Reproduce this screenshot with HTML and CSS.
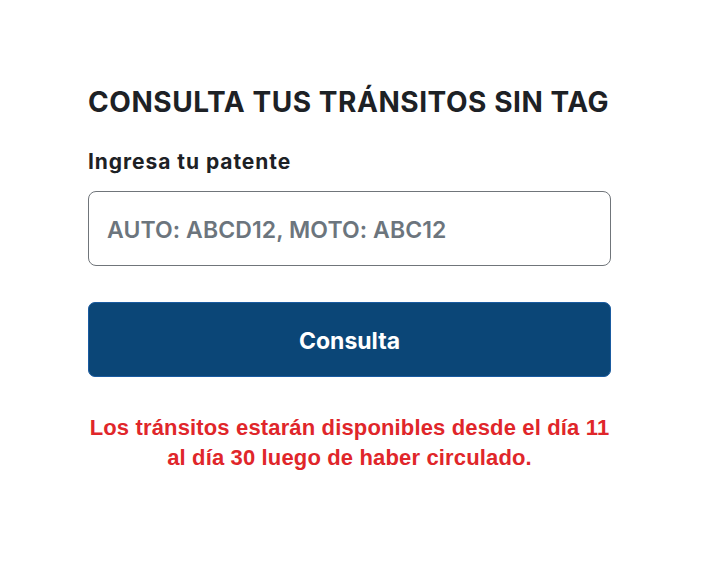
FILE: index.html
```html
<!DOCTYPE html>
<html lang="es">
<head>
<meta charset="utf-8">
<title>Consulta tus tránsitos sin TAG</title>
<link rel="stylesheet" href="styles.css">
</head>
<body>
<main class="page">
  <section class="form">
    <h1 class="title">CONSULTA TUS TRÁNSITOS SIN TAG</h1>
    <label class="label" for="patente">Ingresa tu patente</label>
    <input class="input" id="patente" type="text" placeholder="AUTO: ABCD12, MOTO: ABC12">
    <button class="button" type="button">Consulta</button>
    <p class="notice">Los tránsitos estarán disponibles desde el día 11 al día 30 luego de haber circulado.</p>
  </section>
</main>
</body>
</html>
```

FILE: styles.css
```css
* { box-sizing: border-box; }
html, body { margin: 0; padding: 0; background: #fff; }
body { font-family: Inter, "Noto Sans", sans-serif; color: #212529; }
.page { padding: 84px 0 0 88px; }
.form { width: 523px; display: flex; flex-direction: column; }
.title {
  margin: 0;
  font-size: 28px;
  line-height: 36px;
  font-weight: 700;
  letter-spacing: 0.55px;
  color: #1d2125;
}
.label {
  margin-top: 29px;
  font-size: 21px;
  line-height: 26px;
  font-weight: 700;
  letter-spacing: 0.95px;
  color: #1d2125;
}
.input {
  margin-top: 16px;
  height: 75px;
  width: 100%;
  border: 1px solid #70757a;
  border-radius: 8px;
  padding: 3px 18px 0;
  font-family: Inter, "Noto Sans", sans-serif;
  font-size: 23px;
  font-weight: 600;
  letter-spacing: 0.1px;
  color: #212529;
  outline: none;
}
.input::placeholder { color: #6c757d; opacity: 1; }
.button {
  margin-top: 36px;
  height: 75px;
  width: 100%;
  border: 1px solid #1a5ba0;
  border-radius: 7px;
  background: #0b4677;
  padding: 3px 0 0;
  color: #fff;
  font-family: Inter, "Noto Sans", sans-serif;
  font-size: 23px;
  font-weight: 700;
  cursor: pointer;
}
.notice {
  margin: 36px 0 0;
  text-align: center;
  font-family: "Liberation Sans", Arial, sans-serif;
  font-weight: 700;
  font-size: 22px;
  line-height: 30px;
  letter-spacing: 0.15px;
  color: #e0262a;
}
```
